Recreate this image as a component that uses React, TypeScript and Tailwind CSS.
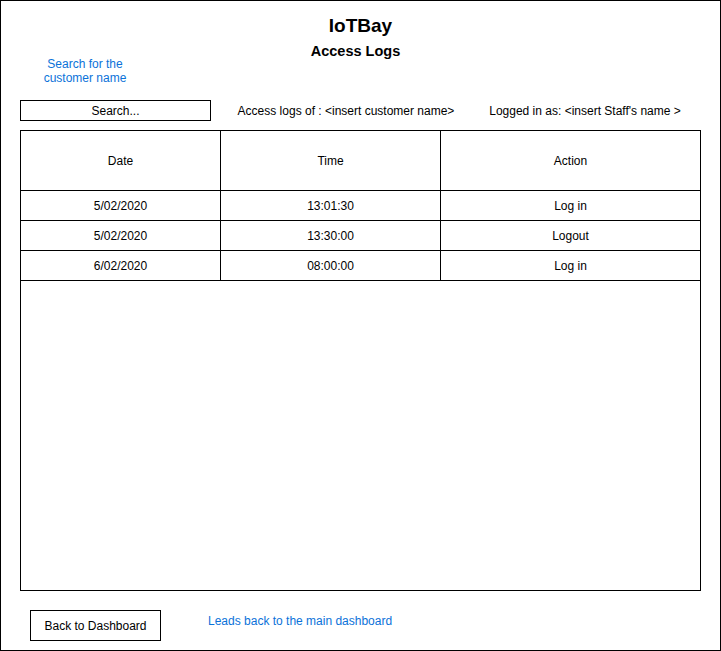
const rows = [
  { date: '5/02/2020', time: '13:01:30', action: 'Log in' },
  { date: '5/02/2020', time: '13:30:00', action: 'Logout' },
  { date: '6/02/2020', time: '08:00:00', action: 'Log in' },
];

export default function App() {
  return (
    <div
      className="w-[721px] h-[651px] box-border border border-black bg-white text-black text-[12px] leading-[14px] flex flex-col"
      style={{ fontFamily: '"Liberation Sans", Arial, sans-serif' }}
    >
      {/* Titles */}
      <div className="flex flex-col items-center pt-[14px]">
        <h1 className="text-[19px] leading-[22px] font-bold">IoTBay</h1>
        <h2 className="mt-[7px] mr-[10px] text-[14.5px] leading-[14px] font-bold">Access Logs</h2>
      </div>

      {/* Note */}
      <div className="mt-[-1px] ml-[19px] w-[130px] text-center text-[#0b72d9]">
        Search for the
        <br />
        customer name
      </div>

      {/* Search row */}
      <div className="mt-[15px] ml-[19px] flex items-center h-[21px]">
        <div className="w-[191px] h-[21px] box-border border border-black flex items-center justify-center">
          Search...
        </div>
        <div className="ml-[10px] w-[250px] text-center">Access logs of : &lt;insert customer name&gt;</div>
        <div className="w-[228px] text-center">Logged in as: &lt;insert Staff's name &gt;</div>
      </div>

      {/* Table */}
      <div className="mt-[9px] ml-[19px] w-[681px] h-[461px] box-border border border-black flex flex-col">
        <div className="flex h-[60px] border-b border-black">
          <div className="w-[200px] border-r border-black flex items-center justify-center">Date</div>
          <div className="w-[220px] border-r border-black flex items-center justify-center">Time</div>
          <div className="flex-1 flex items-center justify-center">Action</div>
        </div>
        {rows.map((r, i) => (
          <div key={i} className="flex h-[30px] border-b border-black">
            <div className="w-[200px] border-r border-black flex items-center justify-center">{r.date}</div>
            <div className="w-[220px] border-r border-black flex items-center justify-center">{r.time}</div>
            <div className="flex-1 flex items-center justify-center">{r.action}</div>
          </div>
        ))}
      </div>

      {/* Footer */}
      <div className="mt-[19px] ml-[29px] flex items-start">
        <button className="w-[131px] h-[31px] box-border border border-black flex items-center justify-center">
          Back to Dashboard
        </button>
        <div className="ml-[47px] mt-[4px] text-[#0b72d9]">Leads back to the main dashboard</div>
      </div>
    </div>
  );
}
